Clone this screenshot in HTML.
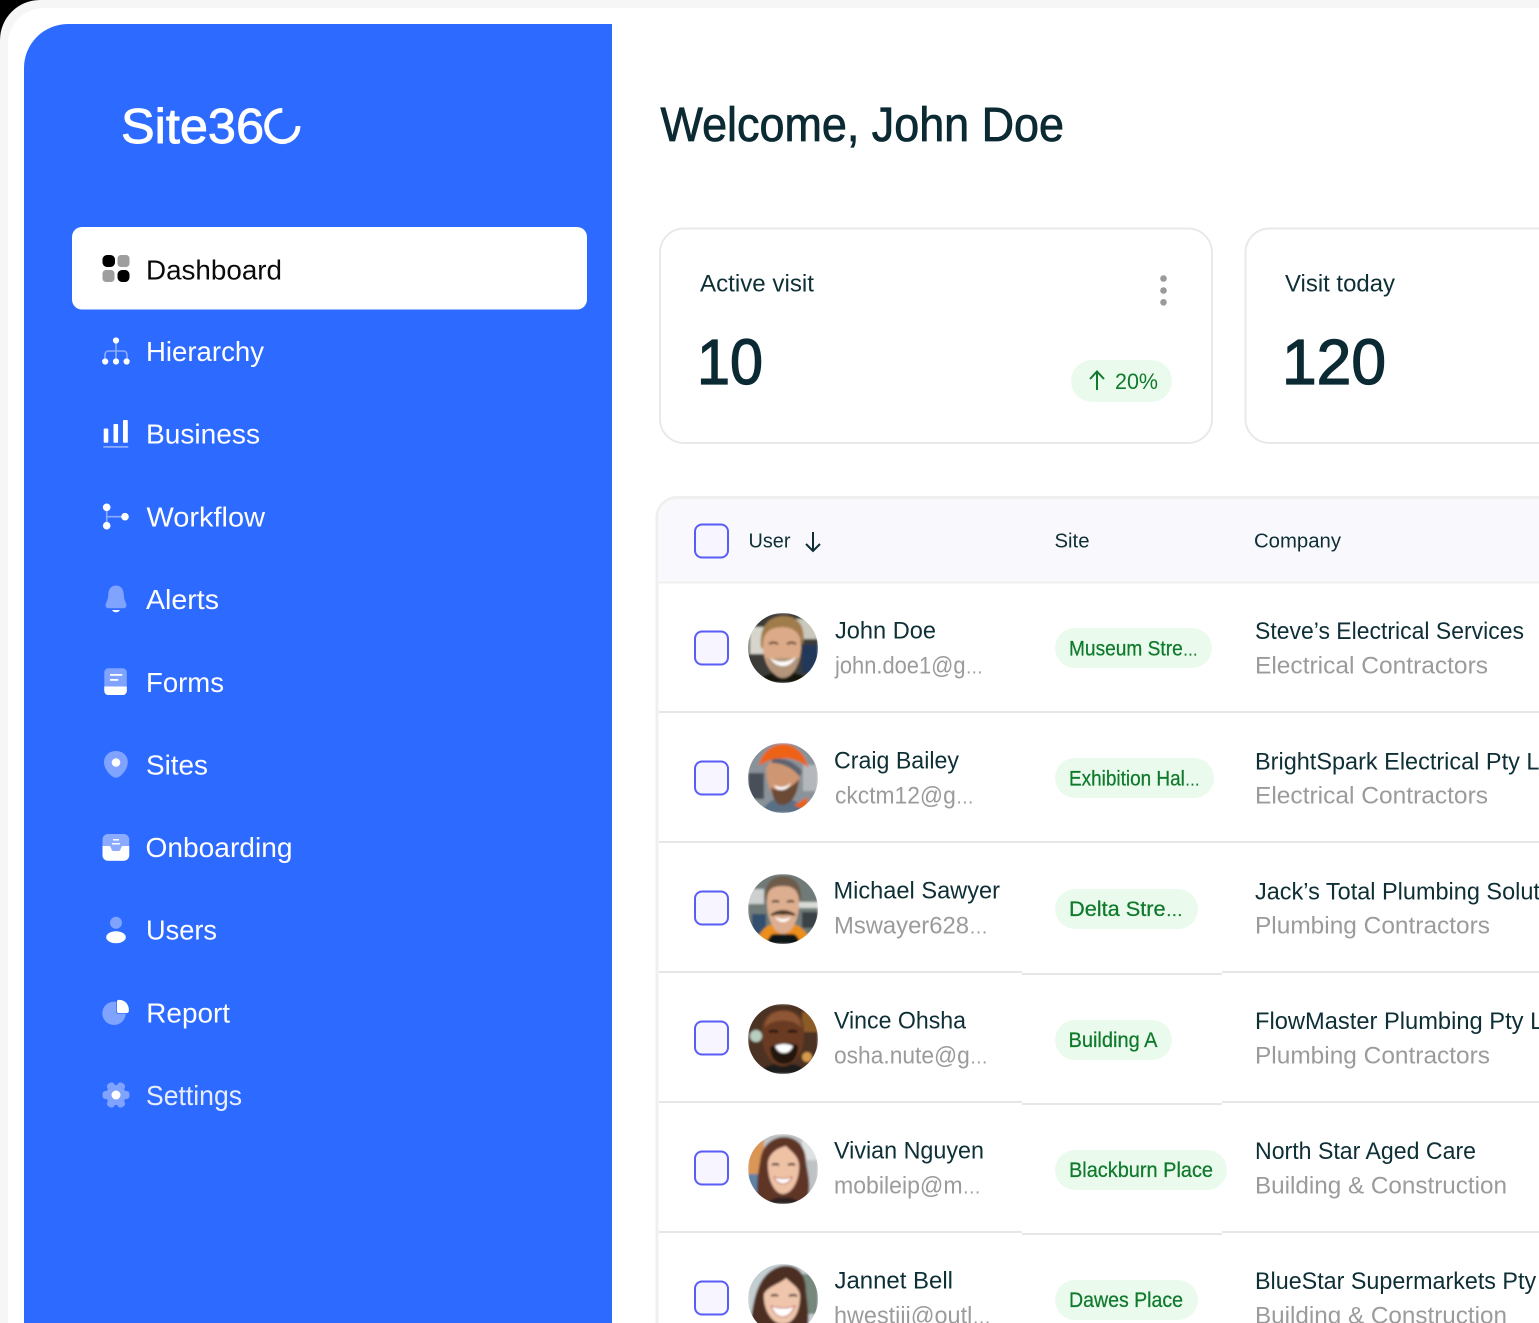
<!DOCTYPE html>
<html lang="en"><head><meta charset="utf-8"><title>Site360 Dashboard</title>
<style>
html,body{margin:0;padding:0;background:#fff;width:1539px;height:1323px;overflow:hidden}
svg{display:block}
text{font-family:"Liberation Sans",Arial,sans-serif}
.nav{font-size:28px;fill:#fff}
.name{font-size:24.5px;fill:#0d2f35}
.sub{font-size:24.5px;fill:#9b9b9b}
.pill{font-size:21px;fill:#107a2c;stroke:#107a2c;stroke-width:.25}
.th{font-size:20px;fill:#0d2f35}
.cb{fill:#f7f5ff;stroke:#5a5cf6;stroke-width:2}
.pb{fill:#eafbee}
.ln{fill:#e6e6e6}
.e{font-size:.8em}
</style></head><body>
<svg width="1539" height="1323" viewBox="0 0 1539 1323" xmlns="http://www.w3.org/2000/svg">
<defs>
<filter id="b" x="-10%" y="-10%" width="120%" height="120%"><feGaussianBlur stdDeviation="1"/></filter>
<clipPath id="av"><circle cx="35" cy="35" r="35"/></clipPath>
</defs>
<rect width="1539" height="1323" fill="#000"/>
<path d="M0 1323V40A40 40 0 0 1 40 0H1539V1323Z" fill="#f6f6f6"/>
<path d="M8 1323V44A36 36 0 0 1 44 8H1539V1323Z" fill="#fff"/>
<path d="M24 1323V68A44 44 0 0 1 68 24H612V1323Z" fill="#2d6aff"/>

<!-- logo -->
<text x="121" y="143" font-size="49" fill="#fff" stroke="#fff" stroke-width=".9" textLength="143" lengthAdjust="spacingAndGlyphs">Site36</text>
<path d="M298 126A15.700 15.700 0 1 1 282.300 110.300" fill="none" stroke="#fff" stroke-width="4.800"/>

<!-- nav -->
<rect x="72" y="227" width="515" height="82.500" rx="10" fill="#fff"/>
<rect x="102.500" y="255" width="12.500" height="12" rx="4.500" fill="#000"/>
<rect x="117.500" y="255" width="12" height="12" rx="3.500" fill="#9e9e9e"/>
<rect x="102.500" y="270" width="12" height="12" rx="3.500" fill="#9e9e9e"/>
<rect x="117.500" y="270" width="12" height="12" rx="4.500" fill="#000"/>
<text x="146" y="279.500" class="nav" style="fill:#0a0a0a" textLength="136" lengthAdjust="spacingAndGlyphs">Dashboard</text>

<!-- hierarchy -->
<path d="M116 340V362M105 362V355Q105 351 109 351H123Q127 351 127 355V362" fill="none" stroke="#8aabff" stroke-width="1.600"/>
<circle cx="116" cy="340.500" r="3.100" fill="#fff"/><circle cx="105.200" cy="361.500" r="3.100" fill="#fff"/><circle cx="116" cy="361.500" r="3.100" fill="#fff"/><circle cx="126.600" cy="361.500" r="3.100" fill="#fff"/>
<text x="146" y="361" class="nav" textLength="118" lengthAdjust="spacingAndGlyphs">Hierarchy</text>

<!-- business -->
<rect x="103.700" y="428.500" width="4.600" height="14.300" rx=".8" fill="#fff"/><rect x="113.500" y="424" width="4.600" height="18.800" rx=".8" fill="#fff"/><rect x="123" y="420" width="4.800" height="22.800" rx=".8" fill="#fff"/>
<rect x="103.300" y="446" width="25" height="1.800" fill="#8aabff"/>
<text x="146" y="443.700" class="nav" textLength="114" lengthAdjust="spacingAndGlyphs">Business</text>

<!-- workflow -->
<path d="M106.700 507V526M106.700 516.700H125" fill="none" stroke="#8aabff" stroke-width="1.600"/>
<circle cx="106.700" cy="507.300" r="3.800" fill="#fff"/><circle cx="106.700" cy="525.700" r="3.800" fill="#fff"/><circle cx="125" cy="516.700" r="3.800" fill="#fff"/>
<text x="146.500" y="526.300" class="nav" textLength="118.500" lengthAdjust="spacingAndGlyphs">Workflow</text>

<!-- alerts -->
<path d="M116 585.500C121.500 585.500 123.700 590 123.800 595C124 600 125.800 602.500 126.300 604C127 606.500 125.500 608.300 123 608.300H109C106.500 608.300 105 606.500 105.700 604C106.200 602.500 108 600 108.200 595C108.300 590 110.500 585.500 116 585.500Z" fill="#7fa3ff"/>
<path d="M112 610H120Q118.500 612.300 116 612.300T112 610Z" fill="#fff"/>
<text x="146" y="609" class="nav" textLength="73" lengthAdjust="spacingAndGlyphs">Alerts</text>

<!-- forms -->
<rect x="104.300" y="668.300" width="22.500" height="26.700" rx="4" fill="#7fa3ff"/>
<path d="M104.300 686.500H126.800V691A4 4 0 0 1 122.800 695H108.300A4 4 0 0 1 104.300 691Z" fill="#fff"/>
<rect x="110" y="674" width="12.300" height="1.800" fill="#fff"/><rect x="110" y="679" width="8.300" height="1.800" fill="#fff"/>
<text x="146" y="692" class="nav" textLength="78" lengthAdjust="spacingAndGlyphs">Forms</text>

<!-- sites -->
<path d="M116 751C123 751 127.800 755.700 127.800 762.300C127.800 769.500 120.500 777.800 116 777.800C111.500 777.800 104 769.500 104 762.300C104 755.700 109 751 116 751Z" fill="#7fa3ff"/>
<circle cx="116" cy="762.500" r="4.300" fill="#fff"/>
<text x="146" y="774.500" class="nav" textLength="62" lengthAdjust="spacingAndGlyphs">Sites</text>

<!-- onboarding -->
<rect x="102.500" y="834" width="26.700" height="26.700" rx="5.500" fill="#8aabff"/>
<path d="M102.500 846H108.500Q110.500 846 111 848L111.500 849.500Q112 851 113.500 851H118.500Q120 851 120.500 849.500L121 848Q121.500 846 123.500 846H129.200V855.200A5.500 5.500 0 0 1 123.700 860.700H108A5.500 5.500 0 0 1 102.500 855.200Z" fill="#fff"/>
<rect x="113" y="839" width="6" height="1.500" fill="#fff"/><rect x="112" y="843" width="8" height="1.500" fill="#fff"/>
<text x="145.500" y="857" class="nav" textLength="147" lengthAdjust="spacingAndGlyphs">Onboarding</text>

<!-- users -->
<circle cx="116" cy="922.700" r="6" fill="#7fa3ff"/><ellipse cx="116" cy="937.300" rx="9.800" ry="6" fill="#fff"/>
<text x="146" y="939.500" class="nav" textLength="71" lengthAdjust="spacingAndGlyphs">Users</text>

<!-- report -->
<circle cx="114" cy="1013.300" r="11.700" fill="#7fa3ff"/>
<path d="M116.500 1002Q116.500 999.300 119 999.300C125 999.500 129.300 1004 129.300 1010.500Q129.300 1013.500 126.500 1013.500H119Q116.500 1013.500 116.500 1011Z" fill="#fff" stroke="#2d6aff" stroke-width=".8"/>
<text x="146.300" y="1022.500" class="nav" textLength="83.700" lengthAdjust="spacingAndGlyphs">Report</text>

<!-- settings -->
<g fill="#7fa3ff">
<circle cx="116" cy="1095" r="10"/>
<rect x="112" y="1081.500" width="8" height="27" rx="3" transform="rotate(90 116 1095)"/>
<rect x="112" y="1081.500" width="8" height="27" rx="3" transform="rotate(30 116 1095)"/>
<rect x="112" y="1081.500" width="8" height="27" rx="3" transform="rotate(150 116 1095)"/>
</g>
<circle cx="116" cy="1095" r="4.500" fill="#fff"/>
<text x="146" y="1105" class="nav" textLength="96" lengthAdjust="spacingAndGlyphs" style="fill:#e6edff">Settings</text>

<!-- title -->
<text x="660.500" y="141" font-size="48" fill="#0b2a33" stroke="#0b2a33" stroke-width=".8" textLength="403.500" lengthAdjust="spacingAndGlyphs">Welcome, John Doe</text>

<!-- cards -->
<rect x="660" y="228.500" width="552" height="214.500" rx="24" fill="#fff" stroke="#e9e9e9" stroke-width="2"/>
<rect x="1245.500" y="228.500" width="400" height="214.500" rx="24" fill="#fff" stroke="#e9e9e9" stroke-width="2"/>
<text x="700" y="291.500" font-size="24" fill="#0d2f35" textLength="114" lengthAdjust="spacingAndGlyphs">Active visit</text>
<text x="1285" y="291.500" font-size="24" fill="#0d2f35" textLength="110" lengthAdjust="spacingAndGlyphs">Visit today</text>
<circle cx="1163.500" cy="278.500" r="3.300" fill="#9a9a9a"/><circle cx="1163.500" cy="290.500" r="3.300" fill="#9a9a9a"/><circle cx="1163.500" cy="302.300" r="3.300" fill="#9a9a9a"/>
<text x="697" y="384" font-size="64" fill="#0b2a33" stroke="#0b2a33" stroke-width="1.300" textLength="66" lengthAdjust="spacingAndGlyphs">10</text>
<text x="1282" y="384" font-size="64" fill="#0b2a33" stroke="#0b2a33" stroke-width="1.300" textLength="104" lengthAdjust="spacingAndGlyphs">120</text>
<rect x="1071" y="360" width="101" height="42" rx="21" class="pb"/>
<path d="M1097 390V372M1090 379L1097 371.500L1104 379" fill="none" stroke="#107a2c" stroke-width="2"/>
<text x="1115" y="389" font-size="22" fill="#107a2c" textLength="43" lengthAdjust="spacingAndGlyphs">20%</text>

<!-- table -->
<path d="M659 1323V518A20 20 0 0 1 679 498.500H1539V582H659Z" fill="#f9f8fd"/>
<path d="M657 1323V518A20 20 0 0 1 677 497.500H1539" fill="none" stroke="#efefef" stroke-width="3"/>
<rect x="659" y="581.500" width="880" height="2" fill="#efefef"/>
<rect x="659" y="711" width="880" height="2" class="ln"/>
<rect x="659" y="841" width="880" height="2" class="ln"/>
<rect x="659" y="971" width="363" height="2" class="ln"/><rect x="1022" y="973" width="200" height="2" class="ln"/><rect x="1222" y="971" width="317" height="2" class="ln"/>
<rect x="659" y="1101" width="363" height="2" class="ln"/><rect x="1022" y="1103" width="200" height="2" class="ln"/><rect x="1222" y="1101" width="317" height="2" class="ln"/>
<rect x="659" y="1231" width="363" height="2" class="ln"/><rect x="1022" y="1233" width="200" height="2" class="ln"/><rect x="1222" y="1231" width="317" height="2" class="ln"/>

<rect x="695" y="524.500" width="33" height="33" rx="7" class="cb"/>
<text x="748.500" y="547.500" class="th" textLength="42" lengthAdjust="spacingAndGlyphs">User</text>
<path d="M813 532V551M806 544L813 551L820 544" fill="none" stroke="#0d2f35" stroke-width="2"/>
<text x="1054.500" y="547.500" class="th" textLength="35" lengthAdjust="spacingAndGlyphs">Site</text>
<text x="1254" y="547.500" class="th" textLength="87" lengthAdjust="spacingAndGlyphs">Company</text>

<rect x="695" y="631.500" width="33" height="33" rx="7" class="cb"/>
<rect x="695" y="761.500" width="33" height="33" rx="7" class="cb"/>
<rect x="695" y="891.500" width="33" height="33" rx="7" class="cb"/>
<rect x="695" y="1021.500" width="33" height="33" rx="7" class="cb"/>
<rect x="695" y="1151.500" width="33" height="33" rx="7" class="cb"/>
<rect x="695" y="1281.500" width="33" height="33" rx="7" class="cb"/>

<!-- avatar 1: John Doe -->
<g transform="translate(748 613)"><g clip-path="url(#av)"><g filter="url(#b)">
<rect width="70" height="70" fill="#3b3a38"/><rect x="2" y="14" width="14" height="27" fill="#d6d6cc"/><rect x="48" y="6" width="22" height="20" fill="#c9c8bb"/><rect x="54" y="32" width="16" height="28" fill="#24395a"/>
<path d="M8 70Q18 58 35 60Q54 58 64 70Z" fill="#16130f"/>
<path d="M13 34C11 12 22 3 36 3C50 3 58 13 55 32C50 18 42 14 32 14C22 16 16 22 15 36Z" fill="#a17c4c"/>
<path d="M15 30C16 19 22 15 33 14C46 14 52 20 53 30C54 46 46 64 34 64C23 64 14 46 15 30Z" fill="#dcaa88"/>
<path d="M18 44C22 58 28 65 35 65C43 65 50 55 52 44C47 47 42 45 34 45C26 45 22 48 18 44Z" fill="#b3957c"/>
<path d="M22 45Q35 53 48 44Q43 53 35 53Q27 53 22 45Z" fill="#fff"/>
<path d="M21 31Q25 28 30 31M39 31Q44 28 48 31" fill="none" stroke="#5a3b28" stroke-width="2"/>
</g></g></g>

<!-- avatar 2: Craig -->
<g transform="translate(748 743)"><g clip-path="url(#av)"><g filter="url(#b)">
<rect width="70" height="70" fill="#8a9299"/><rect x="0" y="30" width="16" height="26" fill="#4a5058"/><rect x="55" y="22" width="15" height="26" fill="#b4b8bc"/>
<path d="M12 70Q22 54 34 56Q52 56 62 70Z" fill="#5a6f85"/>
<path d="M46 62L60 54L58 68Z" fill="#e8621c"/>
<path d="M18 26C20 17 28 16 36 18C46 18 53 24 52 32C50 50 44 60 34 60C26 60 19 44 18 26Z" fill="#cf9673"/>
<path d="M23 44C28 50 44 46 51 36C50 50 44 62 34 62C28 62 24 54 23 44Z" fill="#6a4a35"/>
<path d="M26 42Q35 47 43 40Q40 47 33 47Q28 47 26 42Z" fill="#fff"/>
<path d="M11 23C13 8 26 1 36 1C48 2 58 12 60 25C50 14 28 11 11 23Z" fill="#ee6213"/>
<path d="M24 16C34 14 46 18 54 28L52 34C46 26 36 20 24 20Z" fill="#5d6370"/>
</g></g></g>

<!-- avatar 3: Michael -->
<g transform="translate(748 874)"><g clip-path="url(#av)"><g filter="url(#b)">
<rect width="70" height="70" fill="#6f7a78"/><rect x="0" y="15" width="16" height="15" fill="#ccd0ce"/><rect x="50" y="28" width="20" height="6" fill="#d8dbd6"/><rect x="4" y="40" width="14" height="20" fill="#31506f"/><rect x="54" y="38" width="16" height="16" fill="#3b4347"/>
<path d="M6 70Q14 52 25 50H46Q58 54 64 70Z" fill="#ea8f1b"/>
<path d="M18 70Q22 60 26 60H44Q50 60 52 70Z" fill="#101414"/>
<path d="M17 26C16 8 26 2 35 2C46 2 54 10 53 26Z" fill="#6d5b4a"/>
<path d="M19 24C20 14 26 12 35 12C45 12 50 16 51 26C52 44 44 60 35 60C26 60 18 44 19 24Z" fill="#ddae8f"/>
<path d="M23 41Q35 33 47 41Q40 39 35 40Q30 39 23 41Z" fill="#4f3a2b" stroke="#4f3a2b" stroke-width="2"/>
<path d="M27 43Q35 47 43 43Q40 48 35 48Q30 48 27 43Z" fill="#fff"/>
<path d="M24 28Q28 26 31 28M39 28Q43 26 46 28" fill="none" stroke="#40301f" stroke-width="2"/>
</g></g></g>

<!-- avatar 4: Vince -->
<g transform="translate(748 1004)"><g clip-path="url(#av)"><g filter="url(#b)">
<rect width="70" height="70" fill="#4c3322"/><circle cx="8" cy="32" r="6" fill="#b8ccc0"/><circle cx="59" cy="53" r="5" fill="#d59a4c"/><rect x="54" y="8" width="16" height="20" fill="#8c5b27"/>
<path d="M10 70Q20 58 35 60Q52 58 60 70Z" fill="#1f1d1c"/>
<path d="M14 30C13 12 24 6 35 6C48 6 57 12 56 30C56 50 46 62 35 62C24 62 14 50 14 30Z" fill="#6a3a20"/>
<path d="M16 24C18 12 26 7 35 7C46 7 52 12 54 24C45 14 25 14 16 24Z" fill="#8e5636"/>
<path d="M22 44C26 38 46 38 50 42C50 54 44 60 36 60C28 60 23 54 22 44Z" fill="#241510"/>
<path d="M27 42Q36 38 45 42Q42 49 36 49Q30 49 27 42Z" fill="#fff"/>
<path d="M21 28Q25 26 30 28M40 28Q45 26 49 28" fill="none" stroke="#1e100a" stroke-width="2.500"/>
</g></g></g>

<!-- avatar 5: Vivian -->
<g transform="translate(748 1134)"><g clip-path="url(#av)"><g filter="url(#b)">
<rect width="70" height="70" fill="#bfc3c5"/><rect x="0" y="6" width="16" height="34" fill="#d99656"/><rect x="54" y="6" width="16" height="20" fill="#dfe2e2"/><rect x="0" y="40" width="12" height="30" fill="#5e82a5"/>
<path d="M10 70C8 50 10 40 12 28C14 8 28 3 36 3C50 3 58 14 58 28C60 42 64 52 58 70Z" fill="#5f3525"/>
<path d="M18 70Q26 62 35 64Q46 62 52 70Z" fill="#2a2422"/>
<path d="M20 28C22 18 30 14 38 12C44 18 50 22 51 30C52 46 44 60 35 60C26 60 19 44 20 28Z" fill="#efc2a6"/>
<path d="M26 43Q36 46 44 43Q41 50 35 50Q29 50 26 43Z" fill="#fff" stroke="#c26a5a" stroke-width="1"/>
<path d="M24 31Q27 29 31 31M40 31Q44 29 47 31" fill="none" stroke="#2c1810" stroke-width="2"/>
</g></g></g>

<!-- avatar 6: Jannet -->
<g transform="translate(748 1264)"><g clip-path="url(#av)"><g filter="url(#b)">
<rect width="70" height="70" fill="#c4cdd0"/><rect x="54" y="10" width="16" height="40" fill="#77887c"/>
<path d="M2 70C4 40 8 8 34 2C50 0 58 10 58 28C60 45 62 56 58 70Z" fill="#4d2e20"/>
<path d="M16 30C20 22 32 20 38 14C44 20 52 24 52 32C52 50 44 60 35 60C24 60 15 46 16 30Z" fill="#efc6ac"/>
<path d="M23 42Q36 46 47 42Q42 53 35 53Q27 53 23 42Z" fill="#fff" stroke="#c2645c" stroke-width="1"/>
<path d="M23 32Q27 30 30 32M41 32Q45 30 49 32" fill="none" stroke="#2d1a12" stroke-width="2"/>
</g></g></g>

<!-- names -->
<text x="835" y="638.500" class="name" textLength="101" lengthAdjust="spacingAndGlyphs">John Doe</text>
<text x="835" y="673.500" class="sub" textLength="148" lengthAdjust="spacingAndGlyphs">john.doe1@g<tspan class="e">…</tspan></text>
<text x="834" y="768.500" class="name" textLength="125" lengthAdjust="spacingAndGlyphs">Craig Bailey</text>
<text x="835" y="803.500" class="sub" textLength="139" lengthAdjust="spacingAndGlyphs">ckctm12@g<tspan class="e">…</tspan></text>
<text x="833.500" y="898.500" class="name" textLength="166.500" lengthAdjust="spacingAndGlyphs">Michael Sawyer</text>
<text x="834" y="933.500" class="sub" textLength="154" lengthAdjust="spacingAndGlyphs">Mswayer628<tspan class="e">…</tspan></text>
<text x="834" y="1028.500" class="name" textLength="132" lengthAdjust="spacingAndGlyphs">Vince Ohsha</text>
<text x="834" y="1063.500" class="sub" textLength="154" lengthAdjust="spacingAndGlyphs">osha.nute@g<tspan class="e">…</tspan></text>
<text x="834" y="1158.500" class="name" textLength="150" lengthAdjust="spacingAndGlyphs">Vivian Nguyen</text>
<text x="834" y="1193.500" class="sub" textLength="147" lengthAdjust="spacingAndGlyphs">mobileip@m<tspan class="e">…</tspan></text>
<text x="834.500" y="1288.500" class="name" textLength="118.500" lengthAdjust="spacingAndGlyphs">Jannet Bell</text>
<text x="834" y="1323.500" class="sub" textLength="157" lengthAdjust="spacingAndGlyphs">hwestiii@outl<tspan class="e">…</tspan></text>

<!-- site pills -->
<rect x="1055" y="628" width="157" height="40" rx="20" class="pb"/>
<text x="1069" y="655.500" class="pill" textLength="129" lengthAdjust="spacingAndGlyphs">Museum Stre<tspan class="e">…</tspan></text>
<rect x="1055" y="758" width="159" height="40" rx="20" class="pb"/>
<text x="1069" y="785.500" class="pill" textLength="131" lengthAdjust="spacingAndGlyphs">Exhibition Hal<tspan class="e">…</tspan></text>
<rect x="1055" y="889" width="143" height="40" rx="20" class="pb"/>
<text x="1069" y="916" class="pill" textLength="114" lengthAdjust="spacingAndGlyphs">Delta Stre<tspan class="e">…</tspan></text>
<rect x="1055" y="1020" width="117" height="40" rx="20" class="pb"/>
<text x="1068.500" y="1047" class="pill" textLength="89" lengthAdjust="spacingAndGlyphs">Building A</text>
<rect x="1055" y="1150" width="172" height="40" rx="20" class="pb"/>
<text x="1069" y="1177" class="pill" textLength="144" lengthAdjust="spacingAndGlyphs">Blackburn Place</text>
<rect x="1055" y="1280" width="143" height="40" rx="20" class="pb"/>
<text x="1069" y="1307" class="pill" textLength="114" lengthAdjust="spacingAndGlyphs">Dawes Place</text>

<!-- companies -->
<text x="1255" y="639" class="name" textLength="269" lengthAdjust="spacingAndGlyphs">Steve’s Electrical Services</text>
<text x="1255" y="673.500" class="sub" textLength="233" lengthAdjust="spacingAndGlyphs">Electrical Contractors</text>
<text x="1255" y="769.500" class="name" textLength="304" lengthAdjust="spacingAndGlyphs">BrightSpark Electrical Pty Ltd</text>
<text x="1255" y="803.500" class="sub" textLength="233" lengthAdjust="spacingAndGlyphs">Electrical Contractors</text>
<text x="1255" y="899.500" class="name" textLength="328" lengthAdjust="spacingAndGlyphs">Jack’s Total Plumbing Solutions</text>
<text x="1255" y="933.500" class="sub" textLength="235" lengthAdjust="spacingAndGlyphs">Plumbing Contractors</text>
<text x="1255" y="1029" class="name" textLength="308" lengthAdjust="spacingAndGlyphs">FlowMaster Plumbing Pty Ltd</text>
<text x="1255" y="1063.500" class="sub" textLength="235" lengthAdjust="spacingAndGlyphs">Plumbing Contractors</text>
<text x="1255" y="1159" class="name" textLength="221" lengthAdjust="spacingAndGlyphs">North Star Aged Care</text>
<text x="1255" y="1193.500" class="sub" textLength="252" lengthAdjust="spacingAndGlyphs">Building &amp; Construction</text>
<text x="1255" y="1289" class="name" textLength="320" lengthAdjust="spacingAndGlyphs">BlueStar Supermarkets Pty Ltd</text>
<text x="1255" y="1323.500" class="sub" textLength="252" lengthAdjust="spacingAndGlyphs">Building &amp; Construction</text>
</svg>
</body></html>
